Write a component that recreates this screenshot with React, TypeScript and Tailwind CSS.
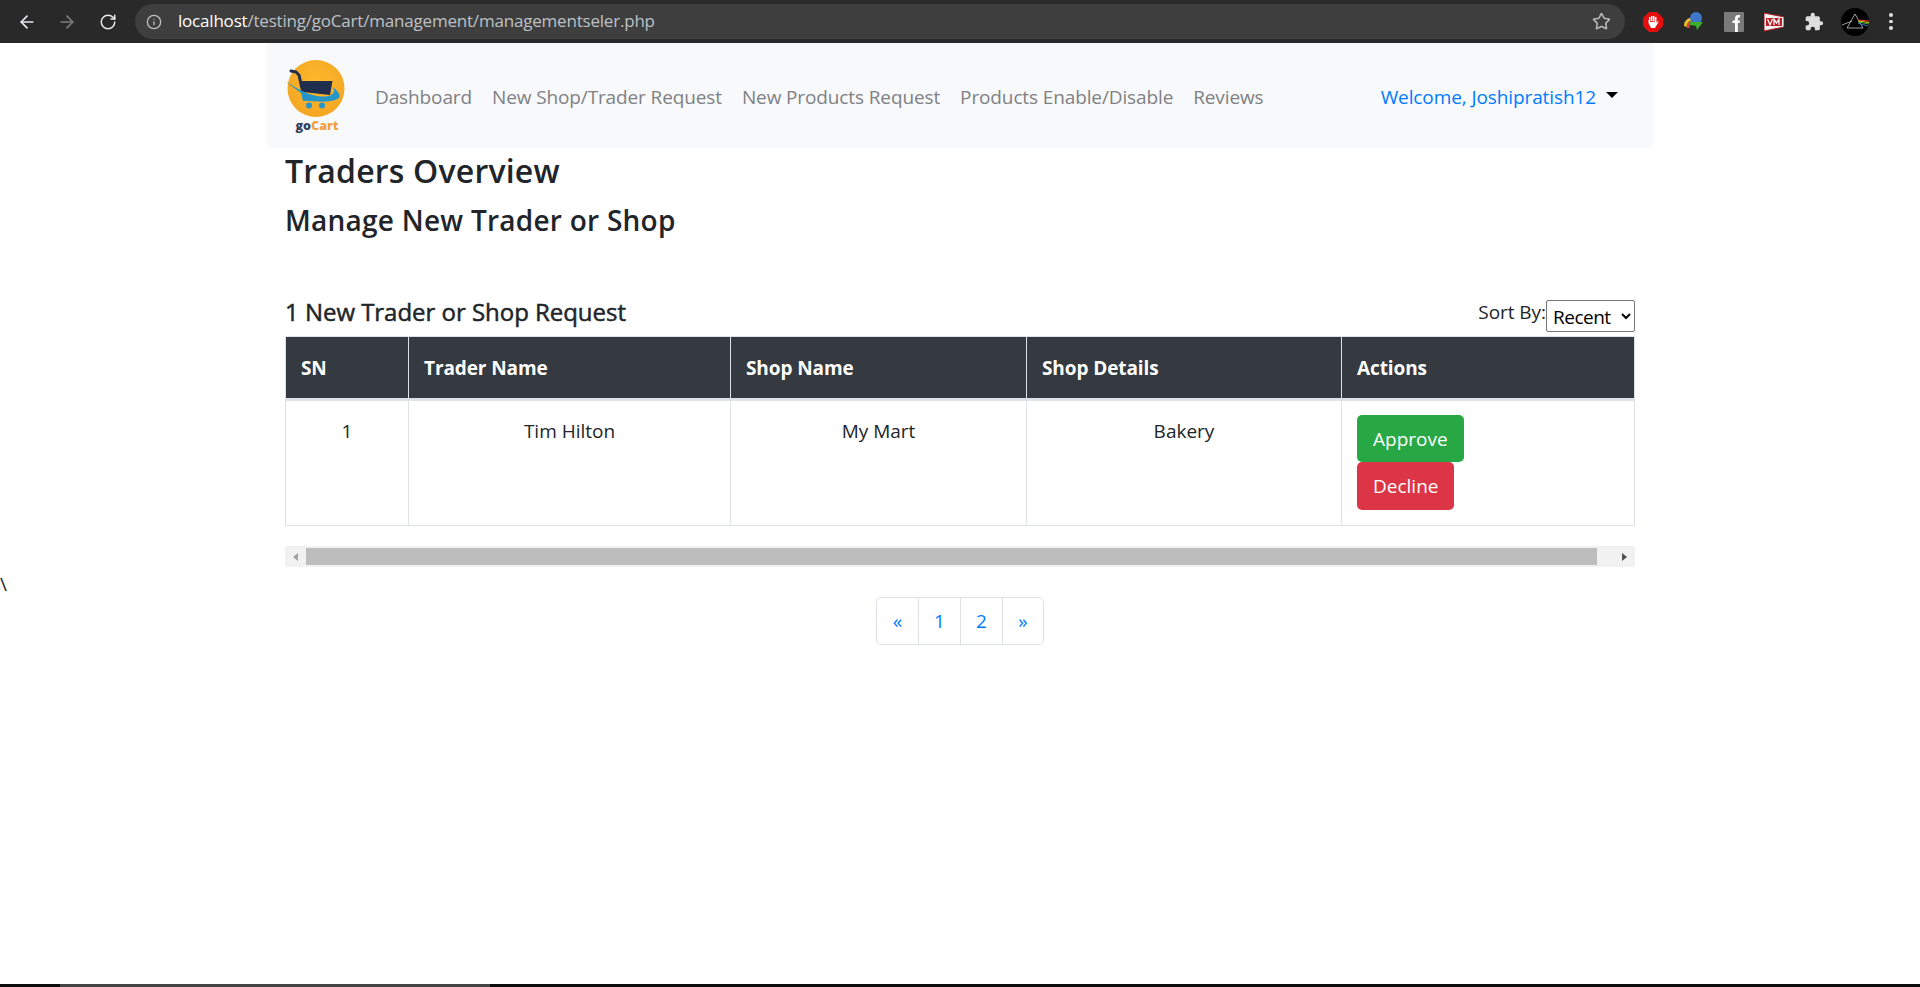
import React from 'react';
import { ArrowLeft, ArrowRight, RotateCw, Info, Star } from 'lucide-react';

const font = "[font-family:'Open_Sans','Noto_Sans',sans-serif]";

const columns = [
    { name: 'SN', width: 'w-[123px]', value: '1' },
    { name: 'Trader Name', width: 'w-[322px]', value: 'Tim Hilton' },
    { name: 'Shop Name', width: 'w-[296px]', value: 'My Mart' },
    { name: 'Shop Details', width: 'w-[315px]', value: 'Bakery' },
];

// coordinates are page pixels, so the viewBox starts where the logo sits
const Logo: React.FC = () => (
    <svg width="62" height="90" viewBox="285 50 62 90">
        <defs>
            <radialGradient id="sun" cx="50%" cy="40%" r="60%">
                <stop offset="0%" stopColor="#fdba2d" />
                <stop offset="100%" stopColor="#f5a623" />
            </radialGradient>
        </defs>
        <circle cx="316" cy="87.5" r="28.5" fill="url(#sun)" />
        <path d="M291 70 L296 71 L299 74 L303 92" fill="none" stroke="#1f2f4d" strokeWidth="3" strokeLinecap="round" strokeLinejoin="round" />
        <path d="M299 80 L332.5 80 L330 94 L303 91 Z" fill="#1f2f4d" />
        <path d="M286 80 C296 88 318 100 331 94 C334 92 335 91 333 86 C340 92 343 97 335 99 C326 102 316 100 303 100 L301 92 C296 88 291 85 286 80 Z" fill="#2596c8" />
        <circle cx="309" cy="104.5" r="3" fill="#2596c8" />
        <circle cx="322" cy="104.5" r="3" fill="#2596c8" />
        <text x="317" y="129" textAnchor="middle" fontSize="12.5" fontWeight="800" fontFamily="'Open Sans', sans-serif">
            <tspan fill="#33415c">go</tspan>
            <tspan fill="#f59f3a">Cart</tspan>
        </text>
    </svg>
);

const BrowserBar: React.FC = () => (
    <div className="h-[43px] shrink-0 bg-[#292929] flex items-center pl-[17px] pr-[20px]">
        <ArrowLeft size={20} strokeWidth={2} className="text-[#e8eaed]" />
        <ArrowRight size={20} strokeWidth={2} className="text-[#7b7c7d] ml-[20px]" />
        <RotateCw size={18} strokeWidth={2} className="text-[#e8eaed] ml-[22px]" />
        <div className="ml-[18px] h-[35px] w-[1490px] rounded-full bg-[#3e3e3e] flex items-center pl-[11px] pr-[14px]">
            <Info size={16} className="text-[#bdbdbd]" />
            <span className={`ml-[16px] pb-[1px] text-[17px] text-[#bdc1c6] ${font} tracking-[-0.2px]`}>
                <span className="text-white">localhost</span>/testing/goCart/management/managementseler.php
            </span>
            <Star size={19} className="ml-auto text-[#b9b9b9]" />
        </div>
        {/* extension icons */}
        <div className="ml-[18px] flex items-center gap-[20px]">
            <svg width="20" height="20" viewBox="0 0 20 20">
                <polygon points="6,0 14,0 20,6 20,14 14,20 6,20 0,14 0,6" fill="#e60d0d" />
                <path d="M6 9 V5 h1.5 V9 M8 9 V4 h1.5 V9 M10 9 V4 h1.5 V9 M12 9.5 V5 h1.5 V11 L15 9 L15.5 10 L12 16 H8 L5.5 11 V8 H7 V10 Z" fill="#fff" />
            </svg>
            <svg width="21" height="20" viewBox="0 0 21 20">
                <path d="M1 14 C1 8 6 5 10 6 L9 9 C6 9 4 11 4 15 Z" fill="#e3c026" />
                <path d="M4 16 C3 12 5 10 9 9 L10 11 C7 11 6 13 7 16 Z" fill="#d8433c" />
                <circle cx="13" cy="6" r="6" fill="#3e76c9" />
                <path d="M7 10 L20 10 L14 18 L13 14 L7 13 Z" fill="#3fae2a" />
            </svg>
            <svg width="20" height="20" viewBox="0 0 20 20">
                <rect width="20" height="20" rx="1" fill="#7a7a7a" />
                <path d="M11 20 V11 H8.5 V8.5 H11 V6.5 C11 4 12.5 3 14 3 H16 V5.5 H14.7 C14 5.5 13.8 6 13.8 6.7 V8.5 H16 L15.6 11 H13.8 V20 Z" fill="#fff" />
            </svg>
            <svg width="20" height="20" viewBox="0 0 20 20">
                <path d="M0 1 L20 5 V15 L0 19 Z" fill="#f2f2f2" stroke="#b51f24" strokeWidth="1" />
                <rect x="2" y="6" width="16" height="8" fill="#b51f24" />
                <path d="M3.5 7 L6 13 L8.5 7 M10 13 V7 L12.5 11 L15 7 V13" fill="none" stroke="#fff" strokeWidth="1.2" />
            </svg>
            <svg width="20" height="20" viewBox="0 0 24 24" fill="#dedede">
                <path d="M20.5 11H19V7a2 2 0 0 0-2-2h-4V3.5a2.5 2.5 0 0 0-5 0V5H4a2 2 0 0 0-2 2v3.8h1.5a2.7 2.7 0 0 1 0 5.4H2V20a2 2 0 0 0 2 2h3.8v-1.5a2.7 2.7 0 0 1 5.4 0V22H17a2 2 0 0 0 2-2v-4h1.5a2.5 2.5 0 0 0 0-5z" />
            </svg>
            <svg width="28" height="28" viewBox="0 0 28 28" className="ml-[-3px]">
                <circle cx="14" cy="14" r="14" fill="#000" />
                <path d="M14 6 L22 20 H6 Z" fill="none" stroke="#c8c8c8" strokeWidth="0.8" />
                <path d="M1 17 L11 13" stroke="#c8c8c8" strokeWidth="0.8" />
                <path d="M17 12 L28 13" stroke="#e0342c" strokeWidth="1" />
                <path d="M17 13 L28 14.5" stroke="#f2d21f" strokeWidth="1" />
                <path d="M17 14 L28 16" stroke="#3fae2a" strokeWidth="1" />
                <path d="M17 15 L27 18" stroke="#3e76c9" strokeWidth="1" />
            </svg>
            <div className="flex flex-col gap-[3px]">
                <span className="w-[3.5px] h-[3.5px] rounded-full bg-[#e0e0e0]" />
                <span className="w-[3.5px] h-[3.5px] rounded-full bg-[#e0e0e0]" />
                <span className="w-[3.5px] h-[3.5px] rounded-full bg-[#e0e0e0]" />
            </div>
        </div>
    </div>
);

const App: React.FC = () => {
    return (
        <div className={`h-screen overflow-hidden flex flex-col bg-white text-[#212529] ${font}`}>
            <BrowserBar />

            <div className="flex flex-1 min-h-0">
                {/* stray character left of the container */}
                <div className="w-[267px] shrink-0 pt-[527px] text-[19px] leading-[28px]">\</div>

                <main className="w-[1386px] shrink-0">
                    <nav className="h-[105px] bg-[#f8f9fa] flex items-center pl-[18px] pr-[35px]">
                        <Logo />
                        <div className="ml-[28px] flex items-center gap-[20px] text-[19px] text-[#7f8184] tracking-[-0.12px] pt-[3px]">
                            <span>Dashboard</span>
                            <span>New Shop/Trader Request</span>
                            <span>New Products Request</span>
                            <span>Products Enable/Disable</span>
                            <span>Reviews</span>
                        </div>
                        <div className="ml-auto flex items-center text-[19px] text-[#007bff] tracking-[-0.1px] pt-[3px]">
                            Welcome, Joshipratish12
                            <span className="ml-[10px] mb-[4px] w-0 h-0 border-x-[6px] border-x-transparent border-t-[6px] border-t-black" />
                        </div>
                    </nav>

                    <div className="px-[18px]">
                        <h2 className="pt-[4px] text-[32px] leading-[38px] font-semibold tracking-[0.2px]">Traders Overview</h2>
                        <h3 className="mt-[13px] text-[28px] leading-[34px] font-semibold tracking-[0.25px]">Manage New Trader or Shop</h3>

                        <div className="mt-[60px] flex items-end justify-between">
                            <h4 className="text-[24px] leading-[29px] font-normal tracking-[-0.03px] pb-[6px] [-webkit-text-stroke:0.5px_#212529]">1 New Trader or Shop Request</h4>
                            <div className="flex items-start">
                                <span className="text-[19px] leading-[24px] tracking-[-0.05px]">Sort By:</span>
                                <select className="w-[89px] h-[32px] border border-[#767676] rounded-[2px] bg-white text-black text-[19px] tracking-[-0.5px] pl-[2px] pt-[2px]">
                                    <option>Recent</option>
                                </select>
                            </div>
                        </div>

                        <table className="mt-[4px] w-[1350px] table-fixed border-collapse text-[19px]">
                            <thead>
                                <tr className="h-[63px] bg-[#343a40] text-white">
                                    {columns.map(col => (
                                        <th key={col.name} className={`${col.width} border border-[#dee2e6] border-b-[3px] text-left pl-[15px] pt-[2px] font-bold tracking-[-0.1px]`}>{col.name}</th>
                                    ))}
                                    <th className="border border-[#dee2e6] border-b-[3px] text-left pl-[15px] pt-[2px] font-bold tracking-[-0.1px]">Actions</th>
                                </tr>
                            </thead>
                            <tbody>
                                <tr className="h-[126px]">
                                    {columns.map(col => (
                                        <td key={col.name} className="border border-[#dee2e6] text-center align-top pt-[16px] leading-[28px]">{col.value}</td>
                                    ))}
                                    <td className="border border-[#dee2e6] align-top pt-[14px] pl-[15px]">
                                        <button className="block h-[47px] px-[16px] pt-[1px] rounded-[5px] bg-[#28a745] text-white">Approve</button>
                                        <button className="block h-[48px] px-[16px] pt-[1px] rounded-[5px] bg-[#dc3545] text-white">Decline</button>
                                    </td>
                                </tr>
                            </tbody>
                        </table>

                        {/* horizontal scrollbar */}
                        <div className="mt-[20px] w-[1350px] h-[21px] bg-[#f1f1f1] flex items-center">
                            <div className="w-[21px] flex justify-center">
                                <span className="w-0 h-0 border-y-[4px] border-y-transparent border-r-[5px] border-r-[#a3a3a3]" />
                            </div>
                            <div className="flex-1 h-[17px] bg-[#bdbdbd]" />
                            <div className="w-[38px] flex justify-end pr-[8px]">
                                <span className="w-0 h-0 border-y-[4px] border-y-transparent border-l-[5px] border-l-[#505050]" />
                            </div>
                        </div>

                        {/* pagination */}
                        <div className="mt-[30px] flex justify-center">
                            <div className="flex h-[48px] border border-[#dee2e6] rounded-[5px] text-[#007bff] text-[19px]">
                                <span className="w-[41px] flex items-center justify-center">«</span>
                                <span className="w-[42px] flex items-center justify-center border-l border-[#dee2e6]">1</span>
                                <span className="w-[42px] flex items-center justify-center border-l border-[#dee2e6]">2</span>
                                <span className="w-[41px] flex items-center justify-center border-l border-[#dee2e6]">»</span>
                            </div>
                        </div>
                    </div>
                </main>
            </div>

            {/* window edge */}
            <div className="h-[3px] shrink-0 bg-[#0d0d0d] flex">
                <div className="ml-[60px] w-[430px] bg-[#444444]" />
            </div>
        </div>
    );
};

export default App;
